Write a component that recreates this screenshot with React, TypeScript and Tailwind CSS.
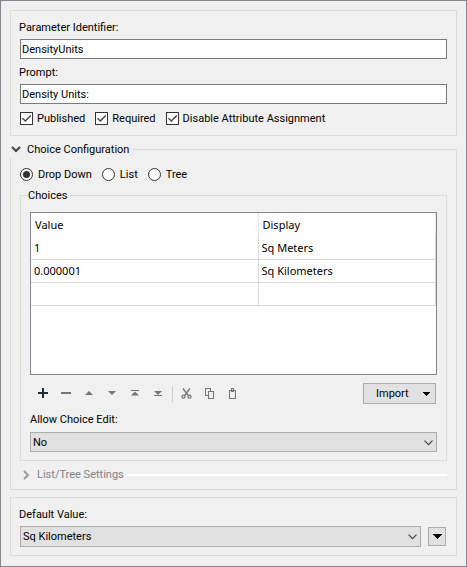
import { useState } from "react";
import type { ReactNode } from "react";

const rows = [
  { value: "1", display: "Sq Meters" },
  { value: "0.000001", display: "Sq Kilometers" },
  { value: "", display: "" },
];

function TextField({ id, label, initial }: { id: string; label: string; initial: string }) {
  return (
    <div className="flex flex-col gap-1">
      <label htmlFor={id} className="-ml-px">{label}</label>
      <input
        id={id}
        type="text"
        defaultValue={initial}
        className="h-5 w-full border border-[#7a7a7a] bg-white px-px outline-none"
      />
    </div>
  );
}

function CheckBox({ label }: { label: string }) {
  return (
    <label className="flex items-center gap-1">
      <span className="relative size-[13px]">
        <input
          type="checkbox"
          defaultChecked
          className="peer block size-[13px] appearance-none border border-[#333333] bg-white"
        />
        <svg
          viewBox="0 0 13 13"
          className="pointer-events-none absolute inset-0 hidden size-[13px] peer-checked:block"
          fill="none"
          stroke="#444444"
          strokeWidth="1.4"
        >
          <path d="M2.5 6.3 5.3 9.1 10.8 3.4" />
        </svg>
      </span>
      {label}
    </label>
  );
}

function Radio({ label, checked }: { label: string; checked?: boolean }) {
  return (
    <label className="flex items-center gap-[5px]">
      <span className="relative size-[13px]">
        <input
          type="radio"
          name="choice-style"
          defaultChecked={checked}
          className="peer block size-[13px] appearance-none rounded-full border border-[#333333] bg-white"
        />
        <span className="pointer-events-none absolute inset-[3px] hidden rounded-full bg-[#333333] peer-checked:block" />
      </span>
      {label}
    </label>
  );
}

function Select({ id, options, className }: { id: string; options: string[]; className: string }) {
  return (
    <div className={`relative ${className}`}>
      <select
        id={id}
        className="block size-full appearance-none border border-[#adadad] bg-[#e1e1e1] pr-6 pl-[2px] outline-none"
      >
        {options.map((option) => (
          <option key={option}>{option}</option>
        ))}
      </select>
      <svg
        viewBox="0 0 9 6"
        className="pointer-events-none absolute top-2 right-1 h-[6px] w-[9px]"
        fill="none"
        stroke="#444444"
        strokeWidth="1.2"
      >
        <path d="M0.5 0.7 4.5 4.7 8.5 0.7" />
      </svg>
    </div>
  );
}

function Caret({ small }: { small?: boolean }) {
  return small ? (
    <svg viewBox="0 0 7 4" className="h-[4px] w-[7px]" shapeRendering="crispEdges" fill="#000000">
      <path d="M0 0h7v1H0zM1 1h5v1H1zM2 2h3v1H2zM3 3h1v1H3z" />
    </svg>
  ) : (
    <svg viewBox="0 0 9 5" className="h-[5px] w-[9px]" shapeRendering="crispEdges" fill="#000000">
      <path d="M0 0h9v1H0zM1 1h7v1H1zM2 2h5v1H2zM3 3h3v1H3zM4 4h1v1H4z" />
    </svg>
  );
}

function Tool({ label, children, color = "#757575" }: { label: string; children: ReactNode; color?: string }) {
  return (
    <button type="button" aria-label={label} className="flex h-[21px] w-[23px] items-center justify-center">
      <svg viewBox="0 0 13 13" className="size-[13px]" fill={color}>
        {children}
      </svg>
    </button>
  );
}

export default function App() {
  const [open, setOpen] = useState(true);
  return (
    <main className="w-full border border-[#828790] bg-[#f0f0f0] px-[9px] pt-[9px] pb-[10px] font-['Roboto',sans-serif] text-[11px] leading-[15px] text-black">
      <section className="border border-[#dcdcdc] p-[9px]">
        <div className="flex flex-col gap-[6px]">
          <TextField id="identifier" label="Parameter Identifier:" initial="DensityUnits" />
          <TextField id="prompt" label="Prompt:" initial="Density Units:" />
        </div>
        <div className="mt-[7px] flex gap-[10px]">
          <CheckBox label="Published" />
          <CheckBox label="Required" />
          <CheckBox label="Disable Attribute Assignment" />
        </div>
      </section>

      <fieldset className="mt-[6px] min-w-0 border border-[#dcdcdc] px-[9px] pb-[7px]">
        <legend className="-ml-[10px] bg-[#f0f0f0] pr-[3px]">
          <button type="button" aria-expanded={open} onClick={() => setOpen(!open)} className="flex items-center gap-[6px] pl-px">
            <svg viewBox="0 0 10 7" className="h-[7px] w-[10px]" fill="none" stroke="#444444" strokeWidth="2">
              <path d="M1 1 5 5 9 1" />
            </svg>
            Choice Configuration
          </button>
        </legend>
        <div className="mt-[10px] flex gap-[10px]">
          <Radio label="Drop Down" checked />
          <Radio label="List" />
          <Radio label="Tree" />
        </div>

        <fieldset className="mt-[6px] min-w-0 border border-[#dcdcdc] px-[9px] pb-2">
          <legend className="-ml-[2px] pr-[3px]">Choices</legend>
          <div className="mt-[9px] h-[163px] border border-[#828790] bg-white font-['Noto_Sans',sans-serif]">
            <table className="w-full table-fixed border-collapse">
              <thead>
                <tr className="h-[23px]">
                  <th className="w-[227px] border-r border-[#e5e5e5] px-1 text-left font-normal">Value</th>
                  <th className="border-r border-[#e5e5e5] px-1 text-left font-normal">Display</th>
                </tr>
              </thead>
              <tbody>
                {rows.map((row) => (
                  <tr key={row.value} className="h-[23px]">
                    <td className="border-r border-b border-[#d8d8d8] px-[3px]">{row.value}</td>
                    <td className="border-r border-b border-[#d8d8d8] px-[3px]">{row.display}</td>
                  </tr>
                ))}
              </tbody>
            </table>
          </div>

          <div className="mt-2 flex items-center justify-between pr-px">
            <div className="flex items-center pl-[2px]">
              <Tool label="Add" color="#1c2f3f">
                <path d="M5 1h2v4h4v2H7v4H5V7H1V5h4z" />
              </Tool>
              <Tool label="Remove">
                <path d="M1 5h10v2H1z" />
              </Tool>
              <Tool label="Move up">
                <path d="M2 8 6 4 10 8z" />
              </Tool>
              <Tool label="Move down">
                <path d="M2 4h8L6 8z" />
              </Tool>
              <Tool label="Move to top">
                <path d="M2 3h8v1H2zM2 8.500 6 4.500 10 8.500z" />
              </Tool>
              <Tool label="Move to bottom">
                <path d="M2 8h8v1H2zM2 4h8L6 8z" />
              </Tool>
              <span className="mx-[2px] h-4 w-px bg-[#cccccc]" />
              <Tool label="Cut">
                <g fill="none" stroke="#757575" strokeWidth="1.3">
                  <path d="M3 1.500 8.300 8.500M10 1.500 4.700 8.500" />
                  <circle cx="3.500" cy="9.700" r="1.500" />
                  <circle cx="9.500" cy="9.700" r="1.500" />
                </g>
              </Tool>
              <Tool label="Copy">
                <path fillRule="evenodd" d="M2 1h6v3h3v8H5V9H2zM3 2v6h2V4h2V2zM6 5v6h4V5z" />
              </Tool>
              <Tool label="Paste">
                <path fillRule="evenodd" d="M3 3h2V1h3v2h2v9H3zM4 4v7h5V4H8v1H5V4zM6 2v1h1V2z" />
              </Tool>
            </div>
            <button type="button" className="flex h-[21px] w-[73px] items-center justify-between border border-[#adadad] bg-[#e1e1e1] pr-[5px] pl-3">
              Import
              <Caret small />
            </button>
          </div>

          <label htmlFor="allow-edit" className="mt-2 block">Allow Choice Edit:</label>
          <Select id="allow-edit" options={["No", "Yes"]} className="mt-[5px] h-5" />
        </fieldset>

        <div className="mt-[6px] flex items-center gap-[3px]">
          <button type="button" disabled className="flex items-center gap-[7px] pl-[3px] text-[#838383]">
            <svg viewBox="0 0 7 10" className="h-[10px] w-[7px]" fill="none" stroke="#9a9a9a" strokeWidth="2">
              <path d="M1 1 5 5 1 9" />
            </svg>
            List/Tree Settings
          </button>
          <span className="h-[2px] flex-1 bg-white" />
        </div>
      </fieldset>

      <section className="mt-[7px] border border-[#dcdcdc] px-[9px] pt-[9px] pb-2">
        <label htmlFor="default-value" className="-ml-px block">Default Value:</label>
        <div className="mt-1 flex items-center gap-[7px] pr-px">
          <Select id="default-value" options={["Sq Kilometers", "Sq Meters"]} className="h-[21px] flex-1" />
          <button type="button" aria-label="Default value options" className="flex h-[19px] w-[18px] items-center justify-center border border-[#adadad] bg-[#e1e1e1]">
            <Caret />
          </button>
        </div>
      </section>
    </main>
  );
}
